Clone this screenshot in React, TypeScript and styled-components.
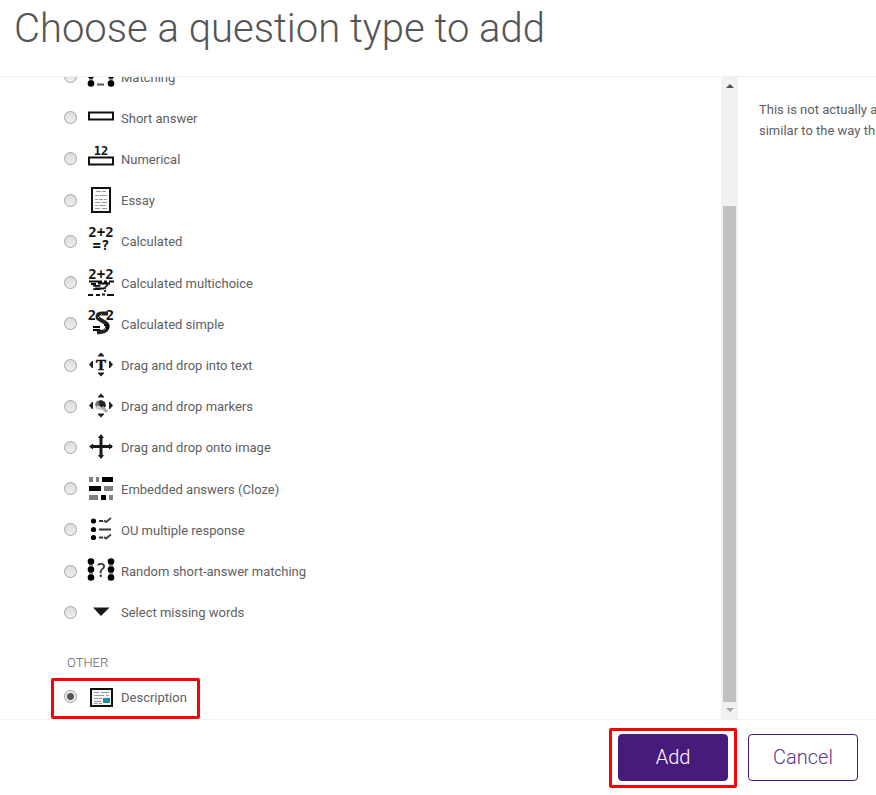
import React, { useState } from "react";
import styled, { createGlobalStyle, css } from "styled-components";

const GlobalStyle = createGlobalStyle`
  *, *::before, *::after { box-sizing: border-box; }
  body {
    margin: 0;
    background: #fff;
    color: #606060;
    font-family: Roboto, "Liberation Sans", sans-serif;
    font-size: 13px;
  }
`;

const Dialog = styled.form`
  display: flex;
  flex-direction: column;
  height: 100vh;
  overflow: hidden;
`;

const Header = styled.header`
  flex: none;
  height: 77px;
  padding: 0 14px;
  border-bottom: 1px solid #f1f1f1;
`;

const Title = styled.h1`
  margin: 0;
  color: #555;
  font-size: 40px;
  font-weight: 300;
  line-height: 58px;
  white-space: nowrap;
`;

const Body = styled.main`
  display: flex;
  flex: 1;
  min-height: 0;
`;

const TypeList = styled.section`
  display: flex;
  flex: 1;
  flex-direction: column;
  justify-content: flex-end;
  min-width: 0;
  overflow: hidden;
  padding-left: 64px;
`;

const QuestionTypes = styled.div`
  display: grid;
  flex: none;
  grid-auto-rows: 1fr;
  height: 577px;
`;

const GroupHeading = styled.h2`
  flex: none;
  margin: 0;
  padding: 20px 3px 3px;
  font-size: 13px;
  font-weight: 300;
  line-height: 20px;
`;

const highlight = css`
  position: relative;
  &::after {
    content: "";
    position: absolute;
    border: 3px solid #fb0007;
    border-radius: 2px;
    pointer-events: none;
  }
`;

const Option = styled.label<{ $marked?: boolean }>`
  display: flex;
  flex: none;
  align-items: center;
  align-self: flex-start;
  min-height: 41px;
  ${({ $marked }) =>
    $marked &&
    css`
      ${highlight}
      margin-bottom: 2px;
      &::after { inset: 2px -13px -2px; }
    `}
`;

const Radio = styled.input`
  appearance: none;
  flex: none;
  width: 13px;
  height: 13px;
  margin: 0 10px 0 0;
  border: 1px solid #a3a3a3;
  border-radius: 50%;
  background: linear-gradient(#dcdcdc, #eee);
  &:checked {
    background: radial-gradient(circle, #555 0 3px, transparent 4px), #e8e8e8;
  }
`;

const Icon = styled.svg`
  flex: none;
  width: 28px;
  height: 28px;
  margin-right: 6px;
`;

const OptionText = styled.span`
  padding-top: 2px;
  line-height: 20px;
  white-space: nowrap;
`;

const Scrollbar = styled.div`
  display: flex;
  flex: none;
  flex-direction: column;
  align-items: center;
  width: 17px;
  background: #f1f1f1;
`;

const ScrollArrow = styled.svg`
  flex: none;
  width: 17px;
  height: 17px;
`;

const ScrollTrack = styled.div`
  display: flex;
  flex: 1;
  padding-top: 112px;
`;

const ScrollThumb = styled.div`
  width: 13px;
  background: #c1c1c1;
`;

const Info = styled.aside`
  flex: none;
  width: 138px;
  padding: 22px 0 0 21px;
  overflow: hidden;
  line-height: 21px;
  white-space: nowrap;
`;

const Footer = styled.footer`
  display: flex;
  flex: none;
  justify-content: flex-end;
  gap: 20px;
  height: 76px;
  padding: 14px 18px;
  border-top: 1px solid #f1f1f1;
`;

const AddFrame = styled.div`
  ${highlight}
  height: 47px;
  &::after { inset: -6px -9px -7px; }
`;

const Button = styled.button<{ $primary?: boolean }>`
  width: 110px;
  height: 47px;
  padding: 0 0 2px;
  border: 1px solid #471b7b;
  border-radius: 4px;
  background: ${({ $primary }) => ($primary ? "#471b7b" : "#fff")};
  color: ${({ $primary }) => ($primary ? "#fff" : "#5c3589")};
  font-family: inherit;
  font-size: 20px;
  font-weight: 300;
`;

const mono = {
  fontFamily: "DejaVu Sans Mono, monospace",
  fontWeight: 700,
  fill: "#111",
  textAnchor: "middle" as const,
};

const Arrows = () => (
  <path
    d="M14 1.5l3 3v1h-6v-1zM14 25.5l3-3v-1h-6v1zM2 13.5l3-3.5h1v7H5zM26 13.5l-3-3.5h-1v7h1z"
    fill="#222"
  />
);

const Sum = () => (
  <text fontSize="14" {...mono}>
    <tspan x="14" y="10">2+2</tspan>
    <tspan x="14" y="23">=?</tspan>
  </text>
);

const Dots = ({ x }: { x: number }) => (
  <g>
    <path d={`M${x} 4v17`} stroke="#999" strokeWidth="4" />
    <circle cx={x} cy="4.5" r="3.3" />
    <circle cx={x} cy="12.5" r="3.3" />
    <circle cx={x} cy="20.5" r="3.3" />
  </g>
);

const icons: Record<string, React.ReactNode> = {
  match: (
    <g>
      <Dots x={4} />
      <Dots x={24} />
      <path d="M10 5h7M10 13h7M10 21.5h7" stroke="#555" strokeWidth="2" />
    </g>
  ),
  short: <path d="M2 8.5h24v7H2z" fill="#fff" stroke="#111" strokeWidth="2" />,
  numerical: (
    <g>
      <path d="M2 12.5h24v7H2z" fill="#fff" stroke="#111" strokeWidth="2" />
      <text x="14" y="10" fontSize="12" {...mono}>12</text>
    </g>
  ),
  essay: (
    <g fill="none">
      <path d="M5 2h18v24H5z" fill="#fafafa" stroke="#111" strokeWidth="2" />
      <path
        d="M9 5.5h5M15 5.5h4M8 9.5h4M13 9.5h7M8 13.5h3M12 13.5h4M17 13.5h3M8 16.5h5M15 16.5h5M8 19.5h3M12 19.5h7M8 22.5h5M15 22.5h5"
        stroke="#999"
      />
    </g>
  ),
  calculated: <Sum />,
  calcmulti: (
    <g>
      <Sum />
      <path
        d="M2 12.5h13M17 12.5h3M22 12.5h5M4 15h5M11 14.5h12M8 19.5h9M1 26h5M9 26h4M15 25.5h3M20 26h7"
        stroke="#111"
        strokeWidth="2"
      />
    </g>
  ),
  calcsimple: (
    <g>
      <text fontSize="14" {...mono}>
        <tspan x="5" y="10">2</tspan>
        <tspan x="23" y="10">2</tspan>
      </text>
      <path d="M21 3.5h-6c-5 0-6 4-2 6l5 3c5 3 2 8-2 9l-6 1" fill="none" stroke="#222" strokeWidth="4" />
      <path d="M6 17h7M6 20h7M17 15h4v3h-3" fill="none" stroke="#000" strokeWidth="2" />
      <path d="M11 8l4-4M16 20l3-2" stroke="#aaa" />
    </g>
  ),
  ddtext: (
    <g>
      <Arrows />
      <text
        x="14"
        y="19"
        fontSize="15"
        fontFamily="Liberation Serif, serif"
        fontWeight="700"
        textAnchor="middle"
        fill="#111"
        stroke="#111"
        strokeWidth=".5"
      >
        T
      </text>
    </g>
  ),
  ddmarker: (
    <g>
      <Arrows />
      <circle cx="13" cy="13" r="5" fill="#ccc" />
      <path d="M10 10l4-2 4 2 1 4-3 3-3-3-2-1z" fill="#222" />
      <path d="M9 14l3-3M11 9l-2 4" stroke="#777" strokeWidth="2" />
      <path d="M15 15l5 5" stroke="#aaa" strokeWidth="3" />
    </g>
  ),
  ddimage: (
    <g fill="#1a1a1a">
      <path d="M12.5 3h3v21h-3zM4 12h21v3H4z" />
      <path d="M14 1l3 4h-6zM14 26l3-4h-6zM2 13.5l4-3v6zM26 13.5l-4-3v6z" />
    </g>
  ),
  cloze: (
    <g>
      <path d="M2 2h4v5H2zM9 2h3v5H9zM17 11h9v5h-9zM2 20h9v5H2zM22 20h4v5h-4z" fill="#808080" />
      <path d="M15 2h11v5H15zM2 11h12v5H2zM14 20h5v5h-5z" />
    </g>
  ),
  oumulti: (
    <g>
      <circle cx="6.5" cy="5" r="2.6" />
      <circle cx="6.5" cy="13.5" r="2.6" />
      <circle cx="6.5" cy="21.5" r="2.6" />
      <path d="M12 5h4M12 13.5h12M12 21.5h4" stroke="#333" strokeWidth="2" />
      <path d="M17 4.5l2 1.5 5-4M17 21l2 1.5 5-4" fill="none" stroke="#444" strokeWidth="2" />
    </g>
  ),
  random: (
    <g>
      <Dots x={4} />
      <Dots x={24} />
      <text
        x="14"
        y="20"
        fontSize="19"
        fontFamily="DejaVu Sans Mono, monospace"
        fill="#333"
        textAnchor="middle"
      >
        ?
      </text>
    </g>
  ),
  select: <path d="M6 9.5h16.5L14 18z" fill="#181818" />,
  description: (
    <g>
      <path d="M4 6h21v17H4z" fill="#f8f8f8" stroke="#111" strokeWidth="2" />
      <path
        d="M7 9.5h5M14 9.5h8M7 12.5h10M19 12.5h3M7 15.5h4M12 15.5h3M7 18.5h7M7 20.5h4M12 20.5h3"
        stroke="#999"
      />
      <path d="M16 15h7v5h-7z" fill="#1683e8" />
      <path d="M16 20v-2l4-1 3 1v2z" fill="#1b9a72" />
    </g>
  ),
};

const types: [string, string][] = [
  ["match", "Matching"],
  ["short", "Short answer"],
  ["numerical", "Numerical"],
  ["essay", "Essay"],
  ["calculated", "Calculated"],
  ["calcmulti", "Calculated multichoice"],
  ["calcsimple", "Calculated simple"],
  ["ddtext", "Drag and drop into text"],
  ["ddmarker", "Drag and drop markers"],
  ["ddimage", "Drag and drop onto image"],
  ["cloze", "Embedded answers (Cloze)"],
  ["oumulti", "OU multiple response"],
  ["random", "Random short-answer matching"],
  ["select", "Select missing words"],
];

export default function App() {
  const [selected, setSelected] = useState("description");

  const renderOption = (id: string, label: string, marked = false) => (
    <Option key={id} htmlFor={id} $marked={marked}>
      <Radio
        type="radio"
        id={id}
        name="qtype"
        value={id}
        checked={selected === id}
        onChange={() => setSelected(id)}
      />
      <Icon viewBox="0 0 28 28" aria-hidden="true">{icons[id]}</Icon>
      <OptionText>{label}</OptionText>
    </Option>
  );

  return (
    <>
      <GlobalStyle />
      <Dialog onSubmit={(e) => e.preventDefault()}>
        <Header>
          <Title>Choose a question type to add</Title>
        </Header>
        <Body>
          <TypeList>
            <QuestionTypes>{types.map(([id, label]) => renderOption(id, label))}</QuestionTypes>
            <GroupHeading>OTHER</GroupHeading>
            {renderOption("description", "Description", true)}
          </TypeList>
          <Scrollbar aria-hidden="true">
            <ScrollArrow viewBox="0 0 17 17">
              <path d="M5 11h8L9 7z" fill="#505050" />
            </ScrollArrow>
            <ScrollTrack>
              <ScrollThumb />
            </ScrollTrack>
            <ScrollArrow viewBox="0 0 17 17">
              <path d="M5 6h8l-4 4z" fill="#a3a3a3" />
            </ScrollArrow>
          </Scrollbar>
          <Info>
            This is not actually a
            <br />
            similar to the way th
          </Info>
        </Body>
        <Footer>
          <AddFrame>
            <Button type="submit" $primary>Add</Button>
          </AddFrame>
          <Button type="button">Cancel</Button>
        </Footer>
      </Dialog>
    </>
  );
}
